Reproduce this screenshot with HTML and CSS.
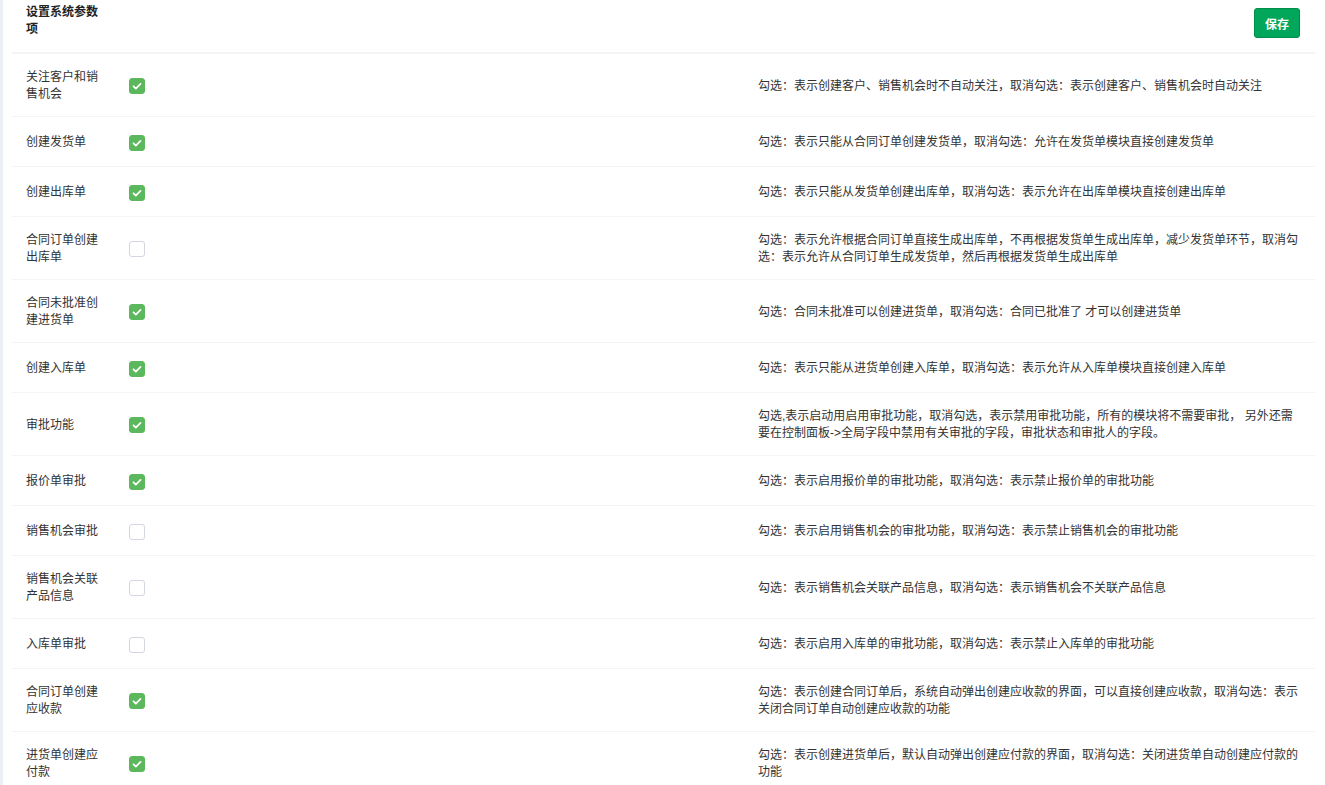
FILE: index.html
```html
<!DOCTYPE html>
<html lang="zh-CN">
<head>
    <meta charset="UTF-8">
    <title>设置系统参数项</title>
    <link rel="stylesheet" href="styles.css">
</head>
<body>
    <div class="content">
        <!-- 标题栏 -->
        <div class="header">
            <div class="title">设置系统参数项</div>
            <button class="btn-save">保存</button>
        </div>

        <table class="params">
            <colgroup>
                <col class="col-name">
                <col class="col-check">
                <col>
            </colgroup>
            <tbody>
                <tr>
                    <td>关注客户和销售机会</td>
                    <td><span class="check on"><svg viewBox="0 0 16 16"><path d="M4 8.3l2.7 2.6L12 5.6"/></svg></span></td>
                    <td>勾选：表示创建客户、销售机会时不自动关注，取消勾选：表示创建客户、销售机会时自动关注</td>
                </tr>
                <tr>
                    <td>创建发货单</td>
                    <td><span class="check on"><svg viewBox="0 0 16 16"><path d="M4 8.3l2.7 2.6L12 5.6"/></svg></span></td>
                    <td>勾选：表示只能从合同订单创建发货单，取消勾选：允许在发货单模块直接创建发货单</td>
                </tr>
                <tr>
                    <td>创建出库单</td>
                    <td><span class="check on"><svg viewBox="0 0 16 16"><path d="M4 8.3l2.7 2.6L12 5.6"/></svg></span></td>
                    <td>勾选：表示只能从发货单创建出库单，取消勾选：表示允许在出库单模块直接创建出库单</td>
                </tr>
                <tr>
                    <td>合同订单创建出库单</td>
                    <td><span class="check"></span></td>
                    <td>勾选：表示允许根据合同订单直接生成出库单，不再根据发货单生成出库单，减少发货单环节，取消勾选：表示允许从合同订单生成发货单，然后再根据发货单生成出库单</td>
                </tr>
                <tr>
                    <td>合同未批准创建进货单</td>
                    <td><span class="check on"><svg viewBox="0 0 16 16"><path d="M4 8.3l2.7 2.6L12 5.6"/></svg></span></td>
                    <td>勾选：合同未批准可以创建进货单，取消勾选：合同已批准了 才可以创建进货单</td>
                </tr>
                <tr>
                    <td>创建入库单</td>
                    <td><span class="check on"><svg viewBox="0 0 16 16"><path d="M4 8.3l2.7 2.6L12 5.6"/></svg></span></td>
                    <td>勾选：表示只能从进货单创建入库单，取消勾选：表示允许从入库单模块直接创建入库单</td>
                </tr>
                <tr>
                    <td>审批功能</td>
                    <td><span class="check on"><svg viewBox="0 0 16 16"><path d="M4 8.3l2.7 2.6L12 5.6"/></svg></span></td>
                    <td>勾选,表示启动用启用审批功能，取消勾选，表示禁用审批功能，所有的模块将不需要审批， 另外还需要在控制面板-&gt;全局字段中禁用有关审批的字段，审批状态和审批人的字段。</td>
                </tr>
                <tr>
                    <td>报价单审批</td>
                    <td><span class="check on"><svg viewBox="0 0 16 16"><path d="M4 8.3l2.7 2.6L12 5.6"/></svg></span></td>
                    <td>勾选：表示启用报价单的审批功能，取消勾选：表示禁止报价单的审批功能</td>
                </tr>
                <tr>
                    <td>销售机会审批</td>
                    <td><span class="check"></span></td>
                    <td>勾选：表示启用销售机会的审批功能，取消勾选：表示禁止销售机会的审批功能</td>
                </tr>
                <tr>
                    <td>销售机会关联产品信息</td>
                    <td><span class="check"></span></td>
                    <td>勾选：表示销售机会关联产品信息，取消勾选：表示销售机会不关联产品信息</td>
                </tr>
                <tr>
                    <td>入库单审批</td>
                    <td><span class="check"></span></td>
                    <td>勾选：表示启用入库单的审批功能，取消勾选：表示禁止入库单的审批功能</td>
                </tr>
                <tr>
                    <td>合同订单创建应收款</td>
                    <td><span class="check on"><svg viewBox="0 0 16 16"><path d="M4 8.3l2.7 2.6L12 5.6"/></svg></span></td>
                    <td>勾选：表示创建合同订单后，系统自动弹出创建应收款的界面，可以直接创建应收款，取消勾选：表示关闭合同订单自动创建应收款的功能</td>
                </tr>
                <tr>
                    <td>进货单创建应付款</td>
                    <td><span class="check on"><svg viewBox="0 0 16 16"><path d="M4 8.3l2.7 2.6L12 5.6"/></svg></span></td>
                    <td>勾选：表示创建进货单后，默认自动弹出创建应付款的界面，取消勾选：关闭进货单自动创建应付款的功能</td>
                </tr>
            </tbody>
        </table>
    </div>
</body>
</html>
```

FILE: styles.css
```css
body {
    margin: 0;
    background-color: #ecf0f5;
    font-family: "Liberation Sans", "Noto Sans CJK SC", sans-serif;
    font-size: 12px;
    color: #333;
}
.content {
    margin-left: 3px;
    min-height: 785px;
    padding: 0 10px 0 9px;
    background-color: #fff;
}
.header {
    display: flex;
    justify-content: space-between;
    align-items: flex-start;
    height: 52px;
    padding: 0 15px 0 14px;
    border-bottom: 2px solid #f4f4f4;
}
.title {
    width: 75px;
    padding-top: 4px;
    font-weight: bold;
    line-height: 17px;
    color: #222;
}
.btn-save {
    margin-top: 8px;
    width: 46px;
    height: 30px;
    padding: 0;
    border: 1px solid #008d4c;
    border-radius: 3px;
    background-color: #00a65a;
    color: #fff;
    font-family: inherit;
    font-size: 12px;
    font-weight: bold;
}
.params {
    width: 100%;
    border-collapse: collapse;
    table-layout: fixed;
}
.col-name {
    width: 103px;
}
.col-check {
    width: 629px;
}
.params td {
    padding: 15px 14px 13px;
    line-height: 17px;
    vertical-align: middle;
    border-bottom: 1px solid #f4f4f4;
}
.params td:nth-child(2) {
    line-height: 21px;
}
.check {
    display: inline-block;
    width: 16px;
    height: 16px;
    box-sizing: border-box;
    border: 1px solid #d2d6de;
    border-radius: 3px;
    background-color: #fff;
    vertical-align: middle;
}
.check.on {
    border-color: #5cb85c;
    background-color: #5cb85c;
}
.check svg {
    display: block;
    width: 14px;
    height: 14px;
}
.check svg path {
    fill: none;
    stroke: #fff;
    stroke-width: 2;
    stroke-linecap: round;
    stroke-linejoin: round;
}
```
